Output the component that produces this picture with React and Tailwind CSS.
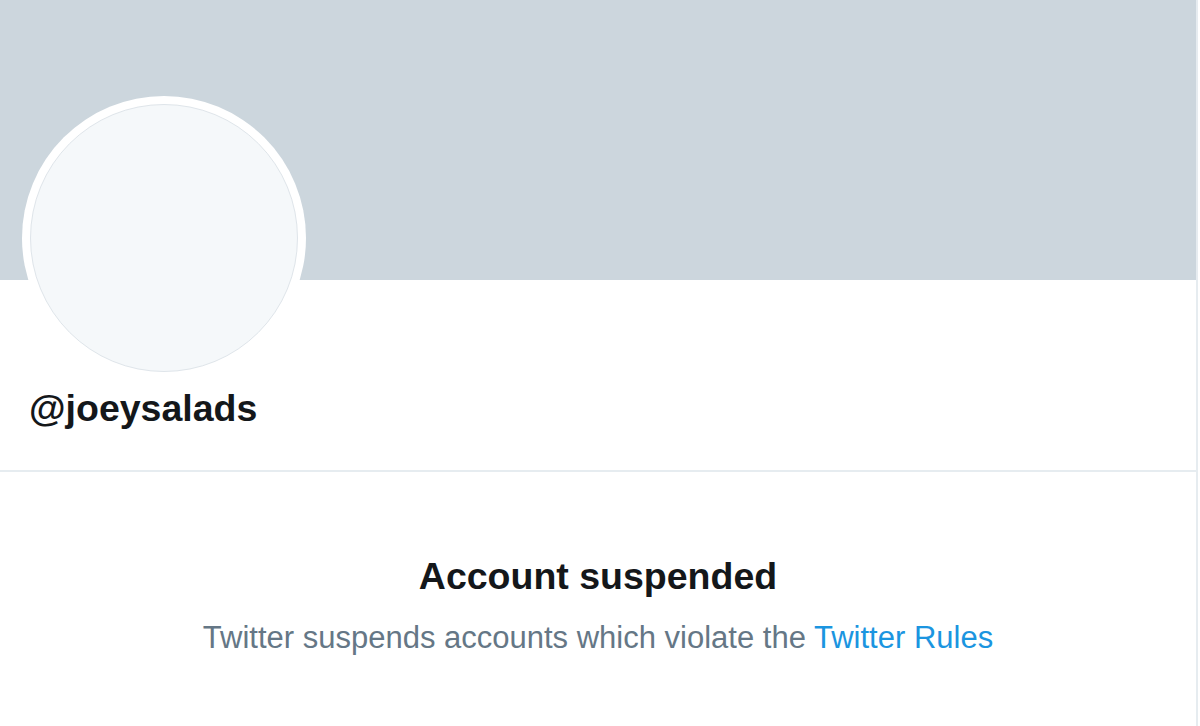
import React from "react";

export default function App() {
  return (
    <div className="w-[1200px] h-[726px] bg-white overflow-hidden" style={{ fontFamily: '"Liberation Sans", Arial, sans-serif' }}>
      <div className="w-[1198px] h-full border-r-2 border-[#e6ecf0]">
        <div className="h-[280px] bg-[#ccd6dd]" />
        <div className="px-[22px] -mt-[184px]">
          <div className="w-[284px] h-[284px] rounded-full bg-white p-[8px]">
            <div className="w-full h-full rounded-full bg-[#f5f8fa] border border-[#dfe5ea]" />
          </div>
        </div>
        <div className="pl-[29px] pt-[6px] pb-[40px] border-b-2 border-[#e6ecf0]">
          <div className="text-[37.5px] leading-[44px] font-bold text-[#14171a]">@joeysalads</div>
        </div>
        <div className="flex flex-col items-center pt-[82px]">
          <div className="text-[37.5px] leading-[45px] font-bold text-[#14171a]">Account suspended</div>
          <div className="mt-[21px] text-[31px] leading-[36px] text-[#657786]">
            Twitter suspends accounts which violate the{" "}
            <a className="text-[#1b95e0]">Twitter Rules</a>
          </div>
        </div>
      </div>
    </div>
  );
}
